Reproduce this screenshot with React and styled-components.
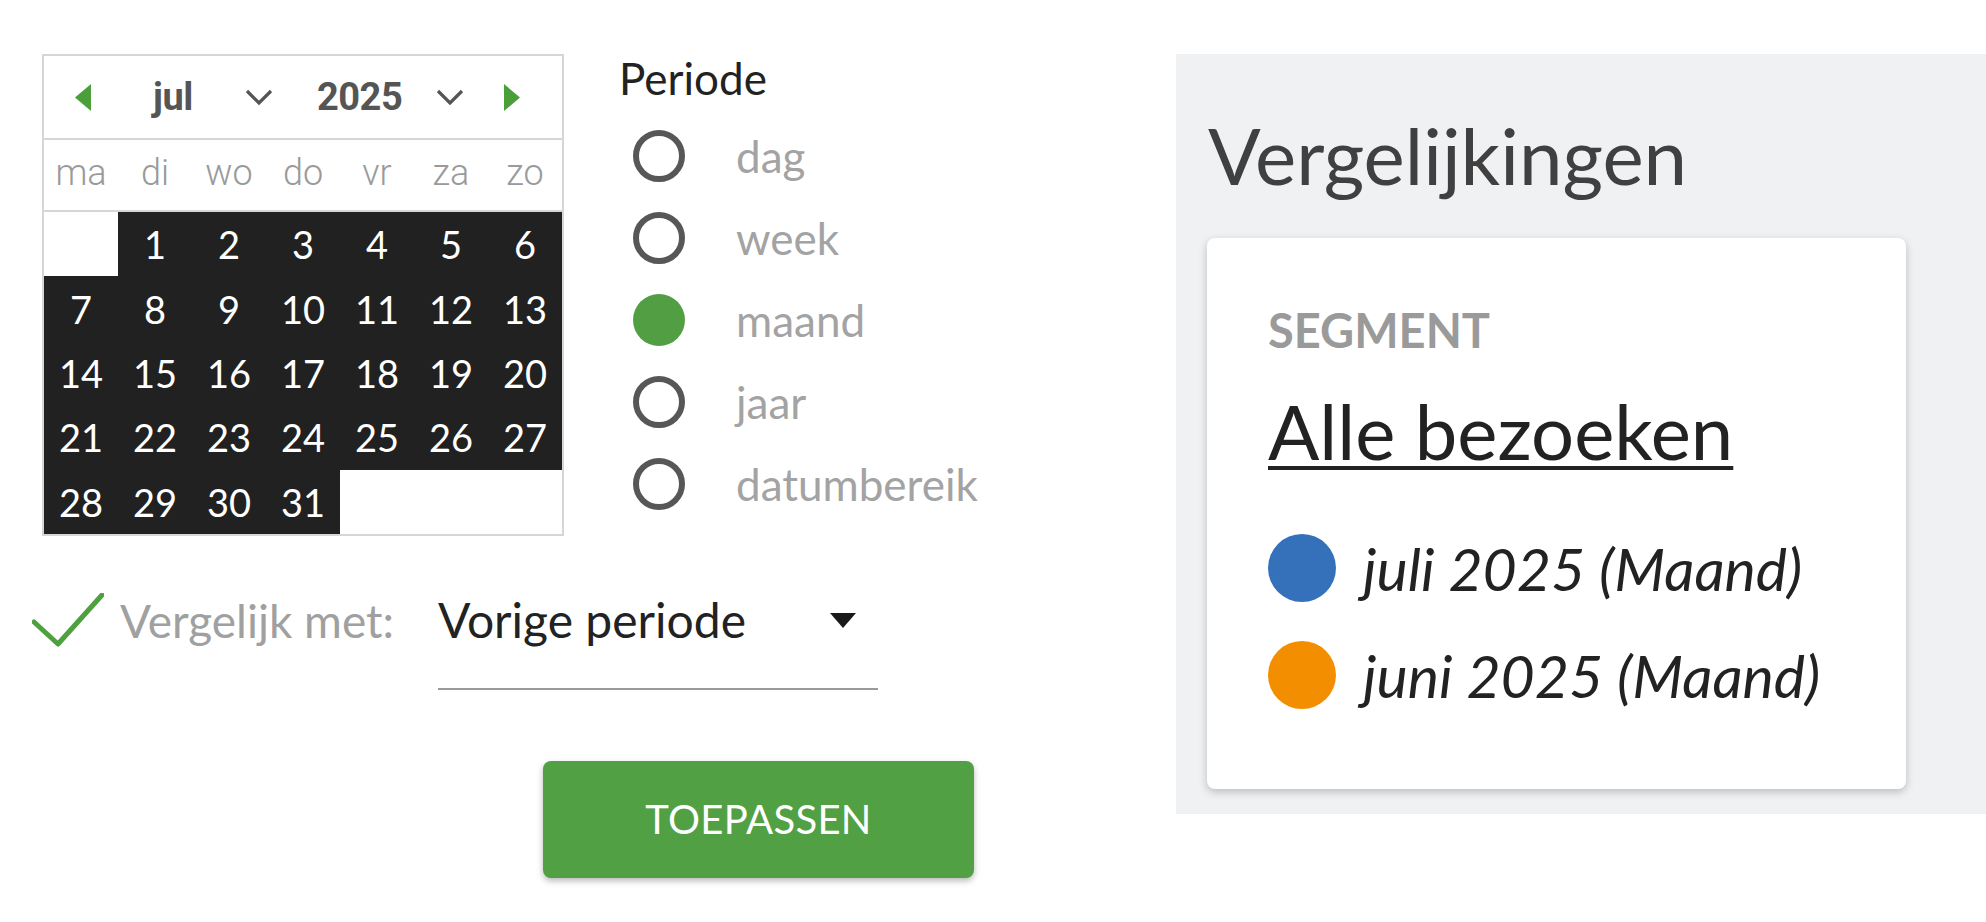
import React from 'react'
import styled, { createGlobalStyle } from 'styled-components'

const GlobalStyle = createGlobalStyle`
  html, body {
    margin: 0;
    padding: 0;
    background: #ffffff;
  }
  body {
    font-family: 'Lato', 'Noto Sans', sans-serif;
  }
  * {
    box-sizing: border-box;
  }
`

const Page = styled.div`
  display: flex;
  align-items: flex-start;
  padding: 54px 0 0 32px;
  width: 1986px;
  height: 922px;
  overflow: hidden;
`

const LeftColumn = styled.div`
  display: flex;
  flex-direction: column;
  width: 942px;
  flex-shrink: 0;
`

const TopRow = styled.div`
  display: flex;
  align-items: flex-start;
  gap: 55px;
  padding-left: 10px;
`

// calendar
const Calendar = styled.div`
  width: 522px;
  flex-shrink: 0;
  border: 2px solid #d6d6d6;
  background: #fff;
`

const CalHeader = styled.div`
  display: flex;
  align-items: center;
  height: 84px;
  padding-left: 31px;
  border-bottom: 2px solid #d6d6d6;
`

const NavArrow = styled.svg`
  width: 16px;
  height: 27px;
  margin-left: ${p => p.$offset || 0}px;
  flex-shrink: 0;
`

const SelectGroup = styled.div`
  display: flex;
  align-items: center;
  margin-left: ${p => p.$offset}px;
`

const SelectText = styled.span`
  width: ${p => p.$width}px;
  font-family: 'Roboto', 'Liberation Sans', sans-serif;
  font-weight: 700;
  font-size: 38px;
  color: #555;
  letter-spacing: -0.5px;
`

const Chevron = styled.svg`
  width: 28px;
  height: 17px;
`

const WeekRow = styled.div`
  display: grid;
  grid-template-columns: repeat(7, 1fr);
  height: 72px;
  border-bottom: 2px solid #d6d6d6;
`

const WeekDay = styled.div`
  display: flex;
  align-items: center;
  justify-content: center;
  font-family: 'Roboto', 'Liberation Sans', sans-serif;
  font-size: 36px;
  font-weight: 300;
  color: #9a9a9a;
  padding-bottom: 4px;
`

const DayGrid = styled.div`
  display: grid;
  grid-template-columns: repeat(7, 1fr);
  grid-auto-rows: 64.4px;
`

const DayCell = styled.div`
  display: flex;
  align-items: center;
  justify-content: center;
  background: ${p => (p.$empty ? '#ffffff' : '#212121')};
  color: #fff;
  font-family: 'Lato', sans-serif;
  font-size: 38px;
`

// periode
const PeriodColumn = styled.div`
  display: flex;
  flex-direction: column;
  padding-top: 2px;
  flex-shrink: 0;
`

const PeriodTitle = styled.div`
  font-size: 44px;
  line-height: 1;
  color: #222;
  margin-bottom: 15px;
`

const RadioRow = styled.label`
  display: flex;
  align-items: center;
  height: 82px;
  padding-left: 14px;
  gap: 51px;
`

const RadioDot = styled.span`
  width: 52px;
  height: 52px;
  border-radius: 50%;
  border: ${p => (p.$checked ? 'none' : '6px solid #575757')};
  background: ${p => (p.$checked ? '#519e43' : 'transparent')};
  flex-shrink: 0;
`

const RadioLabel = styled.span`
  font-size: 44px;
  line-height: 1;
  color: #a3a3a3;
`

// compare
const CompareRow = styled.div`
  display: flex;
  align-items: flex-start;
  margin-top: 57px;
`

const CheckIcon = styled.svg`
  width: 72px;
  height: 54px;
  flex-shrink: 0;
`

const CompareLabel = styled.span`
  width: 334px;
  padding-left: 16px;
  margin-top: 5px;
  font-size: 46px;
  line-height: 1;
  color: #a0a0a0;
  white-space: nowrap;
`

const SelectBox = styled.div`
  display: flex;
  justify-content: space-between;
  align-items: flex-start;
  width: 440px;
  height: 94px;
  margin-top: 3px;
  padding-right: 22px;
  border-bottom: 2px solid #9a9a9a;
`

const SelectValue = styled.span`
  font-size: 48px;
  line-height: 1;
  color: #222;
`

const Caret = styled.svg`
  width: 26px;
  height: 15px;
  margin-top: 17px;
`

const ApplyButton = styled.button`
  align-self: flex-end;
  width: 431px;
  height: 117px;
  margin-top: 71px;
  border: none;
  border-radius: 8px;
  background: #52a044;
  color: #fff;
  font-family: 'Lato', sans-serif;
  font-size: 40px;
  letter-spacing: 0.3px;
  box-shadow: 0 3px 6px rgba(0, 0, 0, 0.28);
  cursor: pointer;
`

// right panel
const ComparePanel = styled.div`
  flex: 1;
  height: 760px;
  margin-left: 202px;
  padding: 62px 0 0 31px;
  background: #f0f1f3;
`

const PanelTitle = styled.h1`
  margin: 0 0 44px 1px;
  font-size: 78px;
  font-weight: 400;
  line-height: 1;
  color: #404040;
`

const Card = styled.div`
  width: 699px;
  height: 551px;
  padding: 69px 0 0 61px;
  background: #fff;
  border-radius: 8px;
  box-shadow: 0 3px 8px rgba(0, 0, 0, 0.22);
`

const SegmentLabel = styled.div`
  font-size: 47px;
  font-weight: 700;
  line-height: 1;
  color: #9a9a9a;
`

const SegmentName = styled.div`
  margin-top: 39px;
  font-size: 76px;
  line-height: 1;
  color: #222;
  text-decoration: underline;
  text-decoration-thickness: 4px;
  text-underline-offset: 6px;
`

const Legend = styled.div`
  margin-top: 45px;
`

const LegendRow = styled.div`
  display: flex;
  align-items: center;
  height: 107px;
  gap: 27px;
`

const LegendDot = styled.span`
  width: 68px;
  height: 68px;
  border-radius: 50%;
  background: ${p => p.$color};
  flex-shrink: 0;
`

const LegendText = styled.span`
  font-size: 59px;
  font-style: italic;
  line-height: 1;
  color: #222;
  padding-top: 2px;
`

const weekDays = ['ma', 'di', 'wo', 'do', 'vr', 'za', 'zo']
const periods = ['dag', 'week', 'maand', 'jaar', 'datumbereik']

const days = [null, ...Array.from({ length: 31 }, (_, i) => i + 1), null, null, null]

const ChevronDown = () => (
  <Chevron viewBox="0 0 28 17">
    <path d="M2 2 L14 14 L26 2" fill="none" stroke="#555" strokeWidth="3.2" />
  </Chevron>
)

export default function App() {
  return (
    <>
      <GlobalStyle />
      <Page>
        <LeftColumn>
          <TopRow>
            <Calendar>
              <CalHeader>
                <NavArrow viewBox="0 0 16 27">
                  <path d="M16 0 L0 13.5 L16 27 Z" fill="#4b9f3a" />
                </NavArrow>
                <SelectGroup $offset={62}>
                  <SelectText $width={92}>jul</SelectText>
                  <ChevronDown />
                </SelectGroup>
                <SelectGroup $offset={44}>
                  <SelectText $width={119}>2025</SelectText>
                  <ChevronDown />
                </SelectGroup>
                <NavArrow viewBox="0 0 16 27" $offset={40}>
                  <path d="M0 0 L16 13.5 L0 27 Z" fill="#4b9f3a" />
                </NavArrow>
              </CalHeader>
              <WeekRow>
                {weekDays.map(d => (
                  <WeekDay key={d}>{d}</WeekDay>
                ))}
              </WeekRow>
              <DayGrid>
                {days.map((d, i) => (
                  <DayCell key={i} $empty={d === null}>
                    {d}
                  </DayCell>
                ))}
              </DayGrid>
            </Calendar>

            <PeriodColumn>
              <PeriodTitle>Periode</PeriodTitle>
              {periods.map(p => (
                <RadioRow key={p}>
                  <RadioDot $checked={p === 'maand'} />
                  <RadioLabel>{p}</RadioLabel>
                </RadioRow>
              ))}
            </PeriodColumn>
          </TopRow>

          <CompareRow>
            <CheckIcon viewBox="0 0 72 54">
              <path
                d="M2 29 L26 51 L70 2"
                fill="none"
                stroke="#4fa03f"
                strokeWidth="5"
                strokeLinecap="round"
                strokeLinejoin="round"
              />
            </CheckIcon>
            <CompareLabel>Vergelijk met:</CompareLabel>
            <SelectBox>
              <SelectValue>Vorige periode</SelectValue>
              <Caret viewBox="0 0 26 15">
                <path d="M0 0 L26 0 L13 15 Z" fill="#1a1a1a" />
              </Caret>
            </SelectBox>
          </CompareRow>

          <ApplyButton>TOEPASSEN</ApplyButton>
        </LeftColumn>

        <ComparePanel>
          <PanelTitle>Vergelijkingen</PanelTitle>
          <Card>
            <SegmentLabel>SEGMENT</SegmentLabel>
            <SegmentName>Alle bezoeken</SegmentName>
            <Legend>
              <LegendRow>
                <LegendDot $color="#3571bb" />
                <LegendText>juli 2025 (Maand)</LegendText>
              </LegendRow>
              <LegendRow>
                <LegendDot $color="#f28e00" />
                <LegendText>juni 2025 (Maand)</LegendText>
              </LegendRow>
            </Legend>
          </Card>
        </ComparePanel>
      </Page>
    </>
  )
}
